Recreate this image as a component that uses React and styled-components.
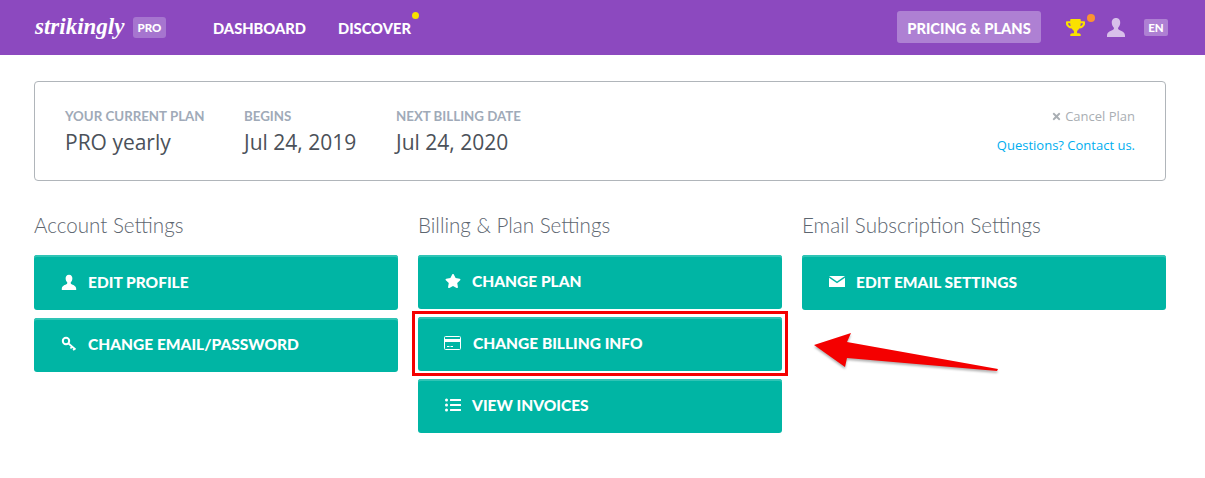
import React from 'react';
import styled, { createGlobalStyle } from 'styled-components';
import { FaStar, FaListUl, FaTrophy, FaTimes } from 'react-icons/fa';

const GlobalStyle = createGlobalStyle`
  html, body {
    margin: 0;
    background: #fff;
    font-family: "Open Sans", sans-serif;
  }
`;

const Page = styled.div`
  position: relative;
  width: 1205px;
  height: 478px;
  overflow: hidden;
`;

const TopBar = styled.header`
  display: flex;
  align-items: center;
  height: 55px;
  padding: 0 37px 1px 35px;
  box-sizing: border-box;
  background: #8c49bf;
  color: #fff;
`;

const Logo = styled.span`
  width: 90px;
  font-family: "Liberation Serif", serif;
  font-style: italic;
  font-weight: 700;
  font-size: 23px;
  line-height: 24px;
  white-space: nowrap;
`;

const ProBadge = styled.span`
  margin: 0 0 0 8px;
  width: 33px;
  height: 21px;
  border-radius: 3px;
  background: #a675cf;
  font: 900 11.5px/21px Lato, sans-serif;
  text-align: center;
`;

const NavLink = styled.a`
  position: relative;
  margin: 2px 0 0 ${(p) => p.$gap}px;
  font: 900 14.7px/20px Lato, sans-serif;
  white-space: nowrap;
`;

const Dot = styled.i`
  position: absolute;
  top: ${(p) => p.$top}px;
  right: ${(p) => p.$right}px;
  width: ${(p) => p.$size}px;
  height: ${(p) => p.$size}px;
  border-radius: 50%;
  background: ${(p) => p.$color};
`;

const PricingButton = styled.a`
  margin-left: auto;
  width: 144px;
  height: 32px;
  border-radius: 3px;
  background: #ae80d3;
  font: 900 14.7px/34px Lato, sans-serif;
  text-align: center;
  white-space: nowrap;
`;

const TrophyWrap = styled.span`
  position: relative;
  display: flex;
  margin-left: 25px;
  color: #fae100;
  font-size: 19px;
`;

const UserWrap = styled.span`
  display: flex;
  margin-left: 21px;
  color: #d8c0ea;
`;

const LangBadge = styled.span`
  margin-left: 18px;
  width: 24px;
  height: 17px;
  border-radius: 2px;
  background: #ae80d3;
  font: 900 11.5px/17px Lato, sans-serif;
  text-align: center;
`;

const Main = styled.main`
  padding: 26px 39px 0 34px;
`;

const PlanBox = styled.section`
  display: flex;
  justify-content: space-between;
  height: 100px;
  padding: 26px 30px 0;
  box-sizing: border-box;
  border: 1px solid #b0b5ba;
  border-radius: 4px;
`;

const PlanFacts = styled.div`
  display: flex;
`;

const Fact = styled.div`
  width: ${(p) => p.$width}px;
`;

const FactLabel = styled.div`
  color: #a0aab8;
  font: 700 13.3px/17px Lato, sans-serif;
  white-space: nowrap;
`;

const FactValue = styled.div`
  margin-top: 3px;
  color: #4b5159;
  font-size: 21px;
  line-height: 28px;
  white-space: nowrap;
`;

const PlanLinks = styled.div`
  display: flex;
  flex-direction: column;
  align-items: flex-end;
  font-size: 13px;
  line-height: 17px;
`;

const CancelLink = styled.a`
  display: flex;
  align-items: center;
  gap: 3px;
  color: #a9aeb3;
`;

const ContactLink = styled.a`
  margin-top: 12px;
  color: #00aeef;
`;

const Columns = styled.div`
  display: grid;
  grid-template-columns: repeat(3, 364px);
  column-gap: 20px;
  margin-top: 30px;
`;

const ColumnTitle = styled.h2`
  margin: 0 0 16px;
  color: #5d6670;
  font: 300 20.6px/28px Lato, sans-serif;
`;

const ButtonStack = styled.div`
  display: flex;
  flex-direction: column;
  gap: 8px;
`;

const SettingsButton = styled.a`
  position: relative;
  display: flex;
  align-items: center;
  height: ${(p) => (p.$tall ? 55 : 54)}px;
  padding: 0 0 2px 26px;
  box-sizing: border-box;
  border-radius: 3px;
  background: #00b5a4;
  box-shadow: inset 0 2px 0 #2fc4b5;
  color: #fff;
  font: 900 15.5px/20px Lato, sans-serif;
  white-space: nowrap;
`;

const IconSlot = styled.span`
  display: flex;
  justify-content: center;
  width: 17px;
  margin-right: ${(p) => p.$gap || 11}px;
  font-size: 16px;
`;

const Highlight = styled.span`
  position: absolute;
  inset: -6px -6px -5px -6px;
  border: 3px solid #f40000;
  pointer-events: none;
`;

const Arrow = styled.svg`
  position: absolute;
  left: 810px;
  top: 328px;
  filter: drop-shadow(0 2px 1px rgba(0, 0, 0, 0.3));
`;

const UserIcon = ({ size }) => (
  <svg width={size} height={size} viewBox="0 0 20 20" fill="currentColor">
    <path d="M10 1c-3 0-4.400 2.200-4.200 5 .1 1.700.8 3.300 1.900 4.400.4.600.3 1.500-.3 2C5.500 13.600 1 14.400 1 18.500V20h18v-1.500c0-4.100-4.500-4.900-6.400-6.100-.6-.5-.7-1.400-.3-2 1.100-1.100 1.800-2.700 1.900-4.400C14.400 3.200 13 1 10 1z" />
  </svg>
);

const KeyIcon = () => (
  <svg width="16" height="16" viewBox="0 0 16 16" fill="none" stroke="currentColor">
    <circle cx="5" cy="5" r="3.200" strokeWidth="2" />
    <path d="M7.500 7.500l7 6M11 10.500l-1.500 2M13.500 12.500l-1.300 1.700" strokeWidth="1.700" />
  </svg>
);

const CardIcon = () => (
  <svg width="17" height="14" viewBox="0 0 17 14">
    <rect x="0.500" y="0.500" width="16" height="13" rx="1" fill="none" stroke="currentColor" />
    <rect x="0.500" y="3" width="16" height="3" fill="currentColor" />
    <path d="M3 10.500h2.500M6.500 10.500h2.500" stroke="currentColor" />
  </svg>
);

const MailIcon = () => (
  <svg width="16" height="11" viewBox="0 0 16 11" fill="currentColor">
    <path d="M0 0h16L8 5.500z" />
    <path d="M0 1.800l8 5.400 8-5.400V11H0z" />
  </svg>
);

const App = () => {
  return (
    <Page>
      <GlobalStyle />
      <TopBar>
        <Logo>strikingly</Logo>
        <ProBadge>PRO</ProBadge>
        <NavLink $gap={47}>DASHBOARD</NavLink>
        <NavLink $gap={32}>
          DISCOVER
          <Dot $top={-6} $right={-8} $size={7} $color="#fae100" />
        </NavLink>
        <PricingButton>PRICING &amp; PLANS</PricingButton>
        <TrophyWrap>
          <FaTrophy />
          <Dot $top={-4} $right={-10} $size={8} $color="#fb9331" />
        </TrophyWrap>
        <UserWrap>
          <UserIcon size={20} />
        </UserWrap>
        <LangBadge>EN</LangBadge>
      </TopBar>
      <Main>
        <PlanBox>
          <PlanFacts>
            <Fact $width={179}>
              <FactLabel>YOUR CURRENT PLAN</FactLabel>
              <FactValue>PRO yearly</FactValue>
            </Fact>
            <Fact $width={152}>
              <FactLabel>BEGINS</FactLabel>
              <FactValue>Jul 24, 2019</FactValue>
            </Fact>
            <Fact $width={140}>
              <FactLabel>NEXT BILLING DATE</FactLabel>
              <FactValue>Jul 24, 2020</FactValue>
            </Fact>
          </PlanFacts>
          <PlanLinks>
            <CancelLink>
              <FaTimes size={11} />
              Cancel Plan
            </CancelLink>
            <ContactLink>Questions? Contact us.</ContactLink>
          </PlanLinks>
        </PlanBox>
        <Columns>
          <div>
            <ColumnTitle>Account Settings</ColumnTitle>
            <ButtonStack>
              <SettingsButton $tall>
                <IconSlot><UserIcon size={16} /></IconSlot>
                EDIT PROFILE
              </SettingsButton>
              <SettingsButton>
                <IconSlot><KeyIcon /></IconSlot>
                CHANGE EMAIL/PASSWORD
              </SettingsButton>
            </ButtonStack>
          </div>
          <div>
            <ColumnTitle>Billing &amp; Plan Settings</ColumnTitle>
            <ButtonStack>
              <SettingsButton>
                <IconSlot><FaStar /></IconSlot>
                CHANGE PLAN
              </SettingsButton>
              <SettingsButton>
                <IconSlot $gap={12}><CardIcon /></IconSlot>
                CHANGE BILLING INFO
                <Highlight />
              </SettingsButton>
              <SettingsButton>
                <IconSlot><FaListUl /></IconSlot>
                VIEW INVOICES
              </SettingsButton>
            </ButtonStack>
          </div>
          <div>
            <ColumnTitle>Email Subscription Settings</ColumnTitle>
            <ButtonStack>
              <SettingsButton $tall>
                <IconSlot><MailIcon /></IconSlot>
                EDIT EMAIL SETTINGS
              </SettingsButton>
            </ButtonStack>
          </div>
        </Columns>
      </Main>
      <Arrow width="195" height="50" viewBox="0 0 195 50">
        <path d="M4 17L41 5 37 14 188 41 187 43 37 30 35 39z" fill="#f40000" />
      </Arrow>
    </Page>
  );
};

export default App;
